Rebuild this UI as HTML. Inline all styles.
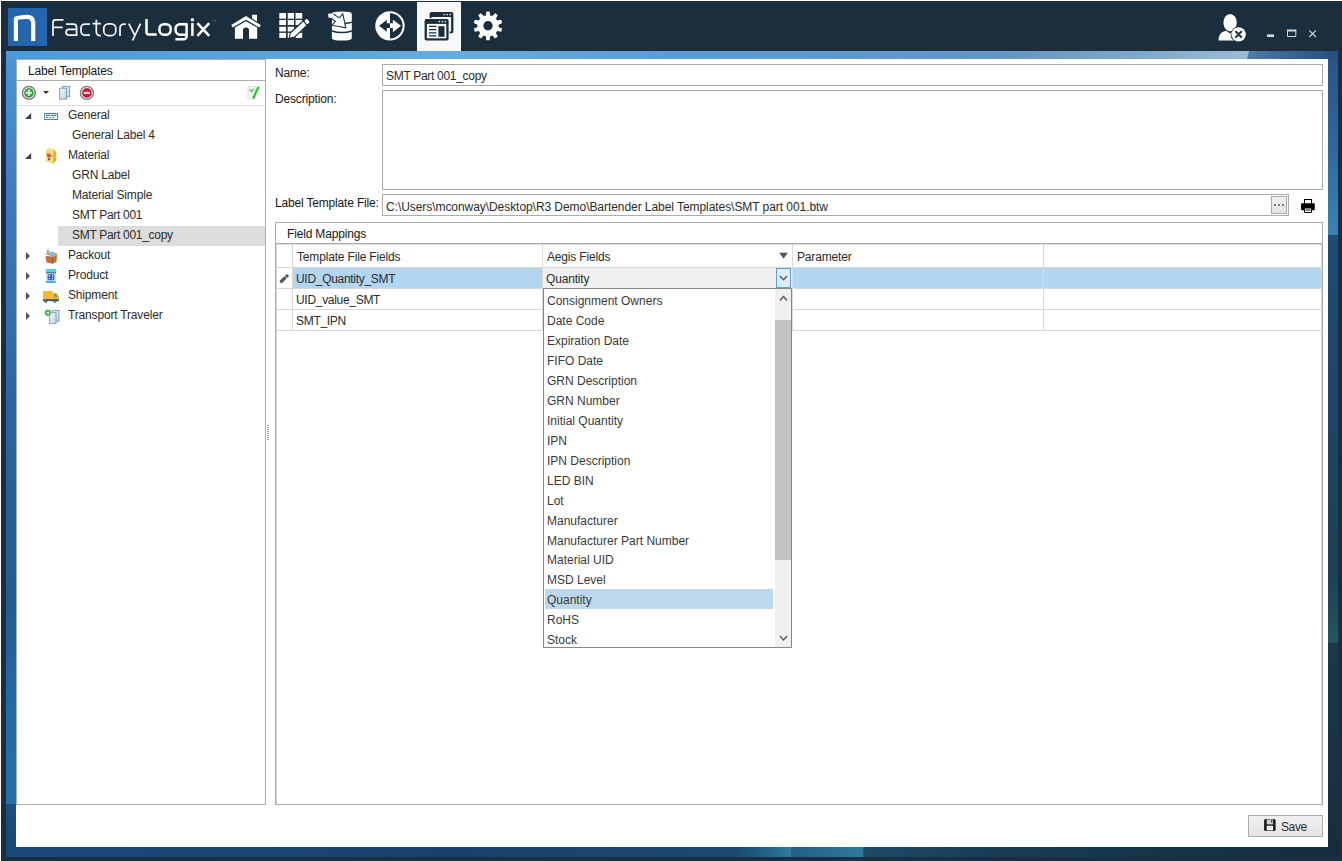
<!DOCTYPE html>
<html><head><meta charset="utf-8">
<style>
html,body{margin:0;padding:0;}
body{width:1342px;height:861px;overflow:hidden;position:relative;background:#fafafa;font-family:"Liberation Sans",sans-serif;font-size:12px;color:#2c2c2c;}
.a{position:absolute;}
.t{position:absolute;margin-left:-1px;white-space:pre;line-height:14px;font-size:12px;letter-spacing:-0.17px;}
.n{letter-spacing:-0.3px;}
.d{letter-spacing:0px;}
#frame{left:1px;top:1px;width:1341px;height:860px;background:#1b2e3d;}
#content{left:16px;top:59px;width:1312px;height:788px;background:#fff;}
</style></head><body>
<div id="frame" class="a"></div>
<div class="a" style="left:6px;top:51px;width:1332px;height:8px;background:linear-gradient(90deg,#4e9ad9 0%,#5ea7da 25%,#68acdb 35%,#5a9cd6 50%,#6396c2 75%,#80a8c8 85%,#9dbcd7 93.6%,#9dbcd7 100%)"></div>
<div class="a" style="left:6px;top:59px;width:10px;height:788px;background:linear-gradient(180deg,#4c95d6 0%,#3a7bbe 19%,#2b66a2 43%,#205b93 69%,#2369a3 80%,#2670a8 94.5%,#1b4e82 94.6%,#184878 100%)"></div>
<div class="a" style="left:1328px;top:59px;width:10px;height:788px;background:linear-gradient(180deg,#27548a 0%,#2e6a9e 12%,#3a84b5 22.3%,#1f4c78 22.4%,#1d4566 45%,#1c4054 65%,#245562 74%,#1a3a48 74.1%,#152e3c 100%)"></div>
<div class="a" style="left:6px;top:847px;width:1332px;height:10px;background:linear-gradient(90deg,#184a7a 0%,#17426d 34%,#1a4a70 55%,#2a7aa0 58.9%,#245f88 59%,#2d7a9c 64.3%,#1d4a68 64.4%,#163c54 75%,#142d3e 100%)"></div>
<div id="content" class="a"></div>
<div class="a" style="left:1245px;top:51px;width:93px;height:8px;background:linear-gradient(90deg,#4f80aa,#3a6894 40%,#24507e);clip-path:polygon(4px 0,100% 0,100% 100%,2px 100%)"></div>

<!-- selected tab -->
<div class="a" style="left:417px;top:2px;width:44px;height:49px;background:#f7f8fa"></div>
<svg class="a" style="left:0;top:0" width="1342" height="51" viewBox="0 0 1342 51">
<rect x="8" y="8" width="39" height="38" fill="#2365ae"/>
<path d="M13.8,40.9 V18.6 Q13.9,16.7 15.9,16.3 Q21,15 27,14.8 Q35.3,14.8 35.3,22.8 V40.9 H31.1 V23.6 Q31.1,18.9 26.8,18.9 Q22.2,18.9 18,19.8 V40.9 Z" fill="#fff"/>
<g fill="none" stroke="#f2f3f4" stroke-width="1.75" stroke-linejoin="round">
<path d="M53,36 V22.4 Q53,19.9 55.5,19.9 H63.5 M53,27.4 H62.8"/>
<path d="M66,24 H73.4 Q76.6,24 76.6,27.2 V36 M76.6,29.3 H69 A2.95,2.95 0 0 0 69,35.2 H76.6"/>
<path d="M90,24 H85 A4,4 0 0 0 81,28 V31.2 A4,4 0 0 0 85,35.2 H90"/>
<path d="M96.3,19.8 V32 A3.6,3.6 0 0 0 99.9,35.6 H100.9 M92.5,23.7 H100.9"/>
<rect x="103.8" y="23.8" width="12" height="11.8" rx="4.6"/>
<path d="M120,36 V28 A4,4 0 0 1 124,24 H125.9"/>
<path d="M128.8,23.7 L134.7,35.2 M140.5,23.7 L132.6,40.5"/>
</g>
<g fill="none" stroke="#fff" stroke-width="2.5" stroke-linejoin="round">
<path d="M146.5,19.1 V32.3 A2.1,2.1 0 0 0 148.6,34.45 H156.7"/>
<rect x="159.45" y="24.15" width="11.2" height="10.6" rx="4.4"/>
<path d="M186.6,34.75 H180 A4.4,4.4 0 0 1 175.6,30.35 V28.55 A4.4,4.4 0 0 1 180,24.15 H186.6 V36.4 A2.9,2.9 0 0 1 183.7,39.3 H175.4"/>
<path d="M192.4,23 V36"/>
<path d="M197.4,23.2 L209.2,35.8 M209.2,23.2 L197.4,35.8"/>
</g>
<circle cx="192.4" cy="19.7" r="1.75" fill="#fff"/>
<text x="211.5" y="21.6" font-family="Liberation Sans" font-size="3.2" fill="#5d6b77">TM</text>
<!-- house -->
<polygon points="231.3,25 246,16.1 260.7,25 259.4,27.5 246,19.8 232.6,27.5" fill="#fff"/>
<polygon points="252.1,14.8 257,14.8 257,21.5 252.1,18.6" fill="#fff"/>
<path d="M234.9,38.8 V27.6 L246,21.2 L257.2,27.6 V38.8 H249 V30.6 A3,3 0 0 0 243,30.6 V38.8 Z" fill="#fff"/>
<!-- grid pencil -->
<g fill="#fff">
<rect x="279.3" y="13" width="6.7" height="5.7"/><rect x="287.7" y="13" width="6.3" height="5.7"/><rect x="295.5" y="13" width="6.7" height="5.7"/>
<rect x="279.3" y="20" width="6.7" height="5"/><rect x="287.7" y="20" width="6.3" height="5"/><rect x="295.5" y="20" width="6.7" height="5"/>
<rect x="279.3" y="26.7" width="6.7" height="4.8"/><rect x="287.7" y="26.7" width="6.3" height="4.8"/><rect x="295.5" y="26.7" width="6.7" height="4.8"/>
<rect x="279.3" y="32.8" width="6.7" height="5.1"/><rect x="287.7" y="32.8" width="6.3" height="5.1"/><rect x="295.5" y="32.8" width="6.7" height="5.1"/>
</g>
<g transform="translate(289.7,37.6) rotate(-43)">
<polygon points="-1.5,0 3.5,-3.6 27,-3.6 27,3.6 3.5,3.6" fill="#1b2e3d"/>
<polygon points="0,0 3.8,-2.3 20.6,-2.3 20.6,2.3 3.8,2.3" fill="#fff"/>
<rect x="21.7" y="-2.3" width="3.8" height="4.6" rx="1.6" fill="#fff"/>
</g>
<!-- database -->
<path d="M331.9,14 Q331.9,11.6 341.85,11.6 Q351.8,11.6 351.8,14 V38 Q351.8,40.6 341.85,40.6 Q331.9,40.6 331.9,38 Z" fill="#fff"/>
<path d="M331.9,30.9 Q341.85,34.2 351.8,30.9" fill="none" stroke="#1b2e3d" stroke-width="1.6"/>
<path d="M345,23.4 Q349,23.2 351.8,22.1" fill="none" stroke="#1b2e3d" stroke-width="1.2"/>
<path d="M328.2,14.3 Q328,13.4 329.5,13.4 L334,13.6 L337.8,16.6 L333.6,18.2 L330,17.9 Q328.2,17.6 328.2,16.5 Z" fill="#fff"/>
<path d="M331,18.3 L334.2,18.9" stroke="#1b2e3d" stroke-width="1.1"/>
<path d="M333.4,14 L339.2,17.9 L342.8,14 L345.8,27.9 L332,25.2 L335.4,21.3 L332.2,19.2" fill="#fff" stroke="#1b2e3d" stroke-width="1.1" stroke-linejoin="miter"/>
<!-- circle arrows -->
<circle cx="389.95" cy="25.85" r="14.7" fill="#fff"/>
<path d="M390,13.2 A12.65,12.65 0 0 1 390,38.5 Z" fill="#1b2e3d"/>
<polygon points="379.1,25.8 386.8,19.9 386.8,23.3 390,23.3 390,28.1 386.8,28.1 386.8,31.8" fill="#1b2e3d"/>
<polygon points="401,25.8 392.9,19.7 392.9,23.3 390,23.3 390,28.1 392.9,28.1 392.9,32.2" fill="#fff"/>
<!-- windows icon -->
<g fill="#1b2e3d">
<rect x="429.6" y="12" width="23.8" height="21.3" rx="1.8"/>
</g>
<rect x="431.5" y="17" width="19.6" height="14.5" fill="#f7f8fa"/>
<rect x="423.6" y="18.1" width="26" height="23.5" fill="#f7f8fa"/>
<rect x="424.6" y="19.1" width="24" height="21.5" rx="1.8" fill="#1b2e3d"/>
<rect x="426.9" y="23.9" width="19.4" height="14.4" fill="#f7f8fa"/>
<g fill="#1b2e3d">
<rect x="428.8" y="25.8" width="7.7" height="1.3" rx="0.6"/><rect x="428.8" y="28.9" width="7.7" height="1.3" rx="0.6"/><rect x="428.8" y="32.2" width="7.7" height="1.3" rx="0.6"/><rect x="428.8" y="35.3" width="7.7" height="1.3" rx="0.6"/>
<rect x="438.4" y="26.2" width="6.1" height="10.6"/>
</g>
<g fill="#f7f8fa">
<circle cx="444.2" cy="14.6" r="0.8"/><circle cx="447.2" cy="14.6" r="0.8"/><circle cx="450.2" cy="14.6" r="0.8"/>
<circle cx="439.3" cy="21.6" r="0.8"/><circle cx="442.3" cy="21.6" r="0.8"/><circle cx="445.3" cy="21.6" r="0.8"/>
</g>
<!-- gear -->
<path fill="#fff" fill-rule="evenodd" d="M484.72,15.72 L485.80,15.43 L486.36,11.39 L489.64,11.39 L490.20,15.43 L491.28,15.72 L492.31,16.12 L495.14,13.18 L497.80,15.11 L495.88,18.71 L496.58,19.57 L497.18,20.50 L501.19,19.79 L502.21,22.91 L498.54,24.69 L498.60,25.80 L498.54,26.91 L502.21,28.69 L501.19,31.81 L497.18,31.10 L496.58,32.03 L495.88,32.89 L497.80,36.49 L495.14,38.42 L492.31,35.48 L491.28,35.88 L490.20,36.17 L489.64,40.21 L486.36,40.21 L485.80,36.17 L484.72,35.88 L483.69,35.48 L480.86,38.42 L478.20,36.49 L480.12,32.89 L479.42,32.03 L478.82,31.10 L474.81,31.81 L473.79,28.69 L477.46,26.91 L477.40,25.80 L477.46,24.69 L473.79,22.91 L474.81,19.79 L478.82,20.50 L479.42,19.57 L480.12,18.71 L478.20,15.11 L480.86,13.18 L483.69,16.12 Z M488,21.1 A4.7,4.7 0 1 0 488,30.5 A4.7,4.7 0 1 0 488,21.1 Z"/>
<!-- user -->
<ellipse cx="1230.1" cy="22.6" rx="6.7" ry="8.6" fill="#fff"/>
<path d="M1218.5,40.6 C1218.5,34 1222,31.8 1226,30.8 L1230.1,33.5 L1234,30.8 C1238,31.8 1240.5,34.5 1240.5,40.6 Z" fill="#fff"/>
<circle cx="1238.6" cy="34.4" r="8" fill="#1b2e3d"/>
<circle cx="1238.6" cy="34.4" r="7.2" fill="#fff"/>
<path d="M1236,31.8 L1241.2,37 M1241.2,31.8 L1236,37" stroke="#1b2e3d" stroke-width="2" stroke-linecap="round"/>
<!-- window controls -->
<rect x="1267" y="34.4" width="7" height="2.6" fill="#d8d8d8"/>
<path d="M1287.5,30.5 H1295.8 V36.5 H1287.5 Z" fill="none" stroke="#d8d8d8" stroke-width="1"/>
<rect x="1287" y="29.5" width="9.3" height="2" fill="#d8d8d8"/>
<path d="M1309.2,30.3 L1316,37 M1316,30.3 L1309.2,37" stroke="#d8d8d8" stroke-width="1.1"/>
</svg>


<!-- left panel -->
<div class="a" style="left:16px;top:59px;width:250px;height:746px;border:1px solid #acacac;box-sizing:border-box"></div>
<div class="a" style="left:17px;top:80px;width:248px;height:1px;background:#acacac"></div>
<div class="a" style="left:17px;top:105px;width:248px;height:1px;background:#e0e0e0"></div>
<div class="t" style="left:29px;top:64px;color:#181818">Label Templates</div>

<!-- tree -->
<div class="a" style="left:58px;top:226px;width:207px;height:20px;background:#dcdcdc"></div>
<div class="t" style="left:69px;top:108px">General</div>
<div class="t" style="left:73px;top:128px">General Label 4</div>
<div class="t" style="left:69px;top:148px">Material</div>
<div class="t" style="left:73px;top:168px">GRN Label</div>
<div class="t" style="left:73px;top:188px">Material Simple</div>
<div class="t n" style="left:73px;top:208px">SMT Part 001</div>
<div class="t n" style="left:73px;top:228px">SMT Part 001_copy</div>
<div class="t" style="left:69px;top:248px">Packout</div>
<div class="t" style="left:69px;top:268px">Product</div>
<div class="t" style="left:69px;top:288px">Shipment</div>
<div class="t" style="left:69px;top:308px">Transport Traveler</div>

<!-- right form -->
<div class="t" style="left:276px;top:66px;color:#181818">Name:</div>
<div class="t" style="left:276px;top:92px;color:#181818">Description:</div>
<div class="t" style="left:276px;top:196px;color:#181818">Label Template File:</div>
<div class="a" style="left:382px;top:64px;width:941px;height:22px;border:1px solid #acacac;box-sizing:border-box"></div>
<div class="t n" style="left:387px;top:69px">SMT Part 001_copy</div>
<div class="a" style="left:382px;top:90px;width:941px;height:100px;border:1px solid #acacac;box-sizing:border-box"></div>
<div class="a" style="left:382px;top:194px;width:907px;height:22px;border:1px solid #acacac;box-sizing:border-box"></div>
<div class="t" style="left:387px;top:200px;letter-spacing:-0.06px">C:\Users\mconway\Desktop\R3 Demo\Bartender Label Templates\SMT part 001.btw</div>

<!-- group -->
<div class="a" style="left:275px;top:222px;width:1048px;height:583px;border:1px solid #acacac;box-sizing:border-box"></div>
<div class="a" style="left:276px;top:243px;width:1046px;height:1px;background:#acacac"></div>
<div class="a" style="left:276px;top:244px;width:1046px;height:1px;background:#dedede"></div>
<div class="a" style="left:276px;top:244px;width:1px;height:560px;background:#d2d2d2"></div>
<div class="a" style="left:1321px;top:244px;width:1px;height:560px;background:#d4d4d4"></div>
<div class="t" style="left:288px;top:227px;color:#181818">Field Mappings</div>

<!-- grid -->
<div class="a" style="left:293px;top:268px;width:1028px;height:20px;background:#b3d6f0"></div>
<div class="a" style="left:543px;top:268px;width:249px;height:20px;background:#f0f0f0"></div>
<div class="a" style="left:277px;top:267px;width:1044px;height:1px;background:#d8d8d8"></div>
<div class="a" style="left:277px;top:288px;width:1044px;height:1px;background:#d8d8d8"></div>
<div class="a" style="left:277px;top:309px;width:1044px;height:1px;background:#d8d8d8"></div>
<div class="a" style="left:277px;top:330px;width:1044px;height:1px;background:#d8d8d8"></div>
<div class="a" style="left:292px;top:244px;width:1px;height:86px;background:#dadada"></div>
<div class="a" style="left:542px;top:244px;width:1px;height:86px;background:#dadada"></div>
<div class="a" style="left:792px;top:244px;width:1px;height:86px;background:#dadada"></div>
<div class="a" style="left:1043px;top:244px;width:1px;height:86px;background:#dadada"></div>
<div class="t" style="left:298px;top:250px">Template File Fields</div>
<div class="t" style="left:548px;top:250px">Aegis Fields</div>
<div class="t" style="left:798px;top:250px">Parameter</div>
<div class="t n" style="left:297px;top:272px">UID_Quantity_SMT</div>
<div class="t n" style="left:297px;top:293px">UID_value_SMT</div>
<div class="t n" style="left:297px;top:314px">SMT_IPN</div>
<div class="t" style="left:547px;top:272px">Quantity</div>
<svg class="a" style="left:276px;top:244px" width="520" height="50" viewBox="276 244 520 50">
<polygon points="779.2,252.8 787.9,252.8 783.55,258.6" fill="#555"/>
<rect x="776.5" y="268.5" width="14" height="19" fill="#dcecfc" stroke="#5b9ee6" stroke-width="1"/>
<path d="M780,276 L783.5,279.8 L787,276" fill="none" stroke="#555" stroke-width="1.4"/>
<path d="M281.4,281.4 L284.5,278.3" stroke="#555" stroke-width="3.3" stroke-linecap="round"/><circle cx="287" cy="275.9" r="1.75" fill="#555"/>
</svg>

<!-- dropdown -->
<div class="a" style="left:543px;top:288px;width:249px;height:360px;background:#fff;border:1px solid #828790;box-sizing:border-box"></div>
<div class="a" style="left:775px;top:289px;width:16px;height:358px;background:#f0f0f0"></div>
<div class="a" style="left:775px;top:320px;width:16px;height:240px;background:#c2c2c2"></div>
<div class="a" style="left:545px;top:589px;width:228px;height:20px;background:#bcd8ee"></div>
<svg class="a" style="left:775px;top:289px" width="16" height="358" viewBox="775 289 16 358">
<path d="M780,300.5 L783.5,296.5 L787,300.5" fill="none" stroke="#555" stroke-width="1.3"/>
<path d="M780,636 L783.5,640 L787,636" fill="none" stroke="#555" stroke-width="1.3"/>
</svg>
<div class="t d" style="left:548px;top:294.00px;color:#3a3a3a">Consignment Owners</div>
<div class="t d" style="left:548px;top:313.96px;color:#3a3a3a">Date Code</div>
<div class="t d" style="left:548px;top:333.92px;color:#3a3a3a">Expiration Date</div>
<div class="t d" style="left:548px;top:353.88px;color:#3a3a3a">FIFO Date</div>
<div class="t d" style="left:548px;top:373.84px;color:#3a3a3a">GRN Description</div>
<div class="t d" style="left:548px;top:393.80px;color:#3a3a3a">GRN Number</div>
<div class="t d" style="left:548px;top:413.76px;color:#3a3a3a">Initial Quantity</div>
<div class="t d" style="left:548px;top:433.72px;color:#3a3a3a">IPN</div>
<div class="t d" style="left:548px;top:453.68px;color:#3a3a3a">IPN Description</div>
<div class="t d" style="left:548px;top:473.64px;color:#3a3a3a">LED BIN</div>
<div class="t d" style="left:548px;top:493.60px;color:#3a3a3a">Lot</div>
<div class="t d" style="left:548px;top:513.56px;color:#3a3a3a">Manufacturer</div>
<div class="t d" style="left:548px;top:533.52px;color:#3a3a3a">Manufacturer Part Number</div>
<div class="t d" style="left:548px;top:553.48px;color:#3a3a3a">Material UID</div>
<div class="t d" style="left:548px;top:573.44px;color:#3a3a3a">MSD Level</div>
<div class="t d" style="left:548px;top:593.40px;color:#3a3a3a">Quantity</div>
<div class="t d" style="left:548px;top:613.36px;color:#3a3a3a">RoHS</div>
<div class="t d" style="left:548px;top:633.32px;color:#3a3a3a">Stock</div>


<!-- save -->
<div class="a" style="left:1248px;top:815px;width:75px;height:22px;background:linear-gradient(#f0f0f0,#e5e5e5);border:1px solid #adadad;box-sizing:border-box"></div>
<div class="t" style="left:1282px;top:820px;letter-spacing:-0.4px">Save</div>
<!-- left toolbar + tree icons -->
<svg class="a" style="left:16px;top:80px" width="250" height="250" viewBox="16 80 250 250">
<defs>
<linearGradient id="docg" x1="0" y1="0" x2="1" y2="1"><stop offset="0" stop-color="#f4f9fd"/><stop offset="1" stop-color="#bcd3e4"/></linearGradient>
<radialGradient id="grn" cx="0.5" cy="0.4" r="0.6"><stop offset="0" stop-color="#4ccf4c"/><stop offset="1" stop-color="#1e9a28"/></radialGradient>
<radialGradient id="red" cx="0.5" cy="0.4" r="0.6"><stop offset="0" stop-color="#f0304a"/><stop offset="1" stop-color="#c80020"/></radialGradient>
</defs>
<!-- add -->
<circle cx="28.9" cy="92.9" r="6.5" fill="#e6e6e6" stroke="#7c7c7c" stroke-width="1.3"/>
<circle cx="28.9" cy="92.9" r="4.4" fill="url(#grn)" stroke="#2c8a30" stroke-width="0.6"/>
<path d="M28.9,89.7 V96.1 M25.7,92.9 H32.1" stroke="#f4f4f4" stroke-width="1.6"/>
<polygon points="43,91 49,91 46,94" fill="#333"/>
<!-- copy -->
<rect x="62.6" y="86.4" width="7" height="10.2" fill="url(#docg)" stroke="#7d9db5" stroke-width="1"/>
<rect x="59.6" y="88.2" width="6.8" height="10.9" fill="url(#docg)" stroke="#7d9db5" stroke-width="1"/>
<!-- remove -->
<circle cx="86.9" cy="92.9" r="6.5" fill="#e6e6e6" stroke="#7c7c7c" stroke-width="1.3"/>
<circle cx="86.9" cy="92.9" r="4.4" fill="url(#red)" stroke="#a8001a" stroke-width="0.6"/>
<rect x="83.7" y="92.1" width="6.4" height="1.7" fill="#f4f4f4"/>
<!-- checklist -->
<rect x="248" y="86.3" width="7.8" height="12.8" fill="#eef4fb" stroke="#c8d8ea" stroke-width="0.7"/>
<path d="M249.5,89.5 L251.5,91.5 L254,89" stroke="#5cc040" stroke-width="1.3" fill="none"/>
<path d="M253.6,97.5 L258.3,87.5" stroke="#2bc82b" stroke-width="2.2" stroke-linecap="round"/>
<path d="M253.2,98.4 L253.9,96.8" stroke="#a07030" stroke-width="1.6"/>

<!-- expanders -->
<polygon points="31.2,113 31.2,119.1 25,119.1" fill="#444"/>
<polygon points="31.2,153 31.2,159.1 25,159.1" fill="#444"/>
<polygon points="26,252.1 30,256 26,259.9" fill="#555"/>
<polygon points="26,272.1 30,276 26,279.9" fill="#555"/>
<polygon points="26,292.1 30,296 26,299.9" fill="#555"/>
<polygon points="26,312.1 30,316 26,319.9" fill="#555"/>

<!-- general icon -->
<rect x="44.6" y="113.5" width="13" height="6" fill="#fff" stroke="#3a8f9e" stroke-width="1"/>
<path d="M46,115.3 H50 M51,115.3 H56.5" stroke="#333" stroke-width="0.9"/>
<path d="M46.3,117.6 H48.2 M49.3,117.6 H51.2 M52.3,117.6 H54.2" stroke="#2a6f9a" stroke-width="1"/>
<!-- material bag -->
<path d="M47.6,148.3 L53.8,149.3 L56.3,152.5 L56.2,160.5 L52.6,163.6 L46.3,161.2 L45.9,152.5 Z" fill="#e9c95a"/>
<path d="M47.6,148.3 L53.8,149.3 L53.5,157 L52.6,163.6 L46.3,161.2 L45.9,152.5 Z" fill="#f6df7a"/>
<path d="M53.8,149.3 L56.3,152.5 L56.2,160.5 L52.6,163.6 L53.5,157 Z" fill="#d6b048"/>
<path d="M47,153.6 L49,153.2 L51.5,155.5 L51,157 L47.2,157.2 Z" fill="#e0504a"/>
<rect x="48" y="157.8" width="2.2" height="2.4" fill="#707070"/>
<!-- packout -->
<path d="M44.5,254 L49,252.5 L57.8,253.5 L54,256.5 Z" fill="#d98a50"/>
<path d="M45.5,256 L54,256.5 L57,254.5 L56.5,262 L52.5,263.7 L46.5,262.5 Z" fill="#c0713a"/>
<path d="M52.5,257 L52.5,263.5" stroke="#9c5526" stroke-width="0.8"/>
<path d="M46.3,248.5 L49,248.2 L50.5,252 L47.5,253.5 Z" fill="#dfe3e8"/>
<circle cx="47.8" cy="251.5" r="1" fill="#40b040"/>
<circle cx="52.2" cy="254.2" r="2.8" fill="#8cb8dc"/>
<!-- product -->
<rect x="46" y="269.1" width="10" height="13.7" rx="0.8" fill="#d8dde2"/>
<rect x="46" y="269.1" width="10" height="3.6" fill="#3fd8f4"/>
<rect x="46" y="272.4" width="10" height="0.9" fill="#145a6a"/>
<rect x="46" y="281.2" width="10" height="1.6" fill="#2aaad8"/>
<rect x="47.6" y="274.3" width="6.8" height="5.9" rx="1.5" fill="#2f5fd8"/>
<circle cx="49.4" cy="276" r="0.7" fill="#fff"/><circle cx="52.6" cy="276" r="0.7" fill="#fff"/><circle cx="49.4" cy="278.6" r="0.7" fill="#fff"/><circle cx="52.6" cy="278.6" r="0.7" fill="#fff"/>
<!-- shipment -->
<rect x="43" y="291" width="9.8" height="8.4" fill="#f7b928"/>
<path d="M52.8,293 H56.2 L58.9,296.5 V299.4 H52.8 Z" fill="#f3b020"/>
<path d="M54.2,294.2 H56 L57.6,296.8 H54.2 Z" fill="#2d9ee8"/>
<rect x="43" y="299.2" width="15.9" height="1.9" fill="#3d4f60"/>
<circle cx="45.8" cy="301.3" r="1.5" fill="#3d4f60"/><circle cx="45.8" cy="301.3" r="0.6" fill="#cfd6dc"/>
<circle cx="54.9" cy="301.3" r="1.5" fill="#3d4f60"/><circle cx="54.9" cy="301.3" r="0.6" fill="#cfd6dc"/>
<!-- transport traveler -->
<rect x="52.4" y="310.5" width="6.6" height="10.8" fill="url(#docg)" stroke="#7d9db5" stroke-width="0.9"/>
<rect x="49.4" y="312.3" width="6.6" height="11.4" fill="url(#docg)" stroke="#7d9db5" stroke-width="0.9"/>
<circle cx="48" cy="312.8" r="3.6" fill="#c8c8c8"/>
<circle cx="48" cy="312.8" r="2.7" fill="#2aa83a"/>
<path d="M48,311.3 V314.3 M46.5,312.8 H49.5" stroke="#fff" stroke-width="1"/>
</svg>

<!-- file button + printer -->
<div class="a" style="left:1271px;top:196px;width:16px;height:18px;border:1px solid #a8a8a8;box-sizing:border-box;background:linear-gradient(#efefef,#e3e3e3)"></div>
<svg class="a" style="left:1270px;top:195px" width="50" height="22" viewBox="1270 195 50 22">
<rect x="1274" y="204" width="2" height="2" fill="#808080"/><rect x="1278" y="204" width="2" height="2" fill="#808080"/><rect x="1282" y="204" width="2" height="2" fill="#808080"/>
<rect x="1304.5" y="199.5" width="7" height="5" fill="#fff" stroke="#000" stroke-width="1"/>
<rect x="1301" y="203.3" width="13.8" height="7" rx="1.2" fill="#000"/>
<path d="M1304.5,208.5 V212.5 H1311.5 V208.5" fill="#fff" stroke="#000" stroke-width="1"/>
<rect x="1305.5" y="209" width="5" height="2" fill="#888"/>
</svg>

<!-- splitter grip -->
<div class="a" style="left:267px;top:425px;width:2px;height:15px;background:repeating-linear-gradient(180deg,#9a9a9a 0,#9a9a9a 1px,transparent 1px,transparent 2px)"></div>

<!-- save floppy -->
<svg class="a" style="left:1262px;top:817px" width="16" height="16" viewBox="1262 817 16 16">
<defs><linearGradient id="flop" x1="0" y1="0" x2="1" y2="0"><stop offset="0" stop-color="#111"/><stop offset="0.5" stop-color="#555"/><stop offset="1" stop-color="#111"/></linearGradient></defs>
<rect x="1264.1" y="819" width="11.5" height="12" rx="1.6" fill="url(#flop)"/>
<rect x="1266.8" y="819.6" width="6.2" height="4.6" fill="#d0d0d0"/>
<rect x="1271.2" y="820.3" width="1.1" height="2.2" fill="#111"/>
<rect x="1266.8" y="826" width="6.2" height="4.2" fill="#fff"/>
<rect x="1267.8" y="827.6" width="4.2" height="0.6" fill="#aaa"/>
</svg>

</body></html>
